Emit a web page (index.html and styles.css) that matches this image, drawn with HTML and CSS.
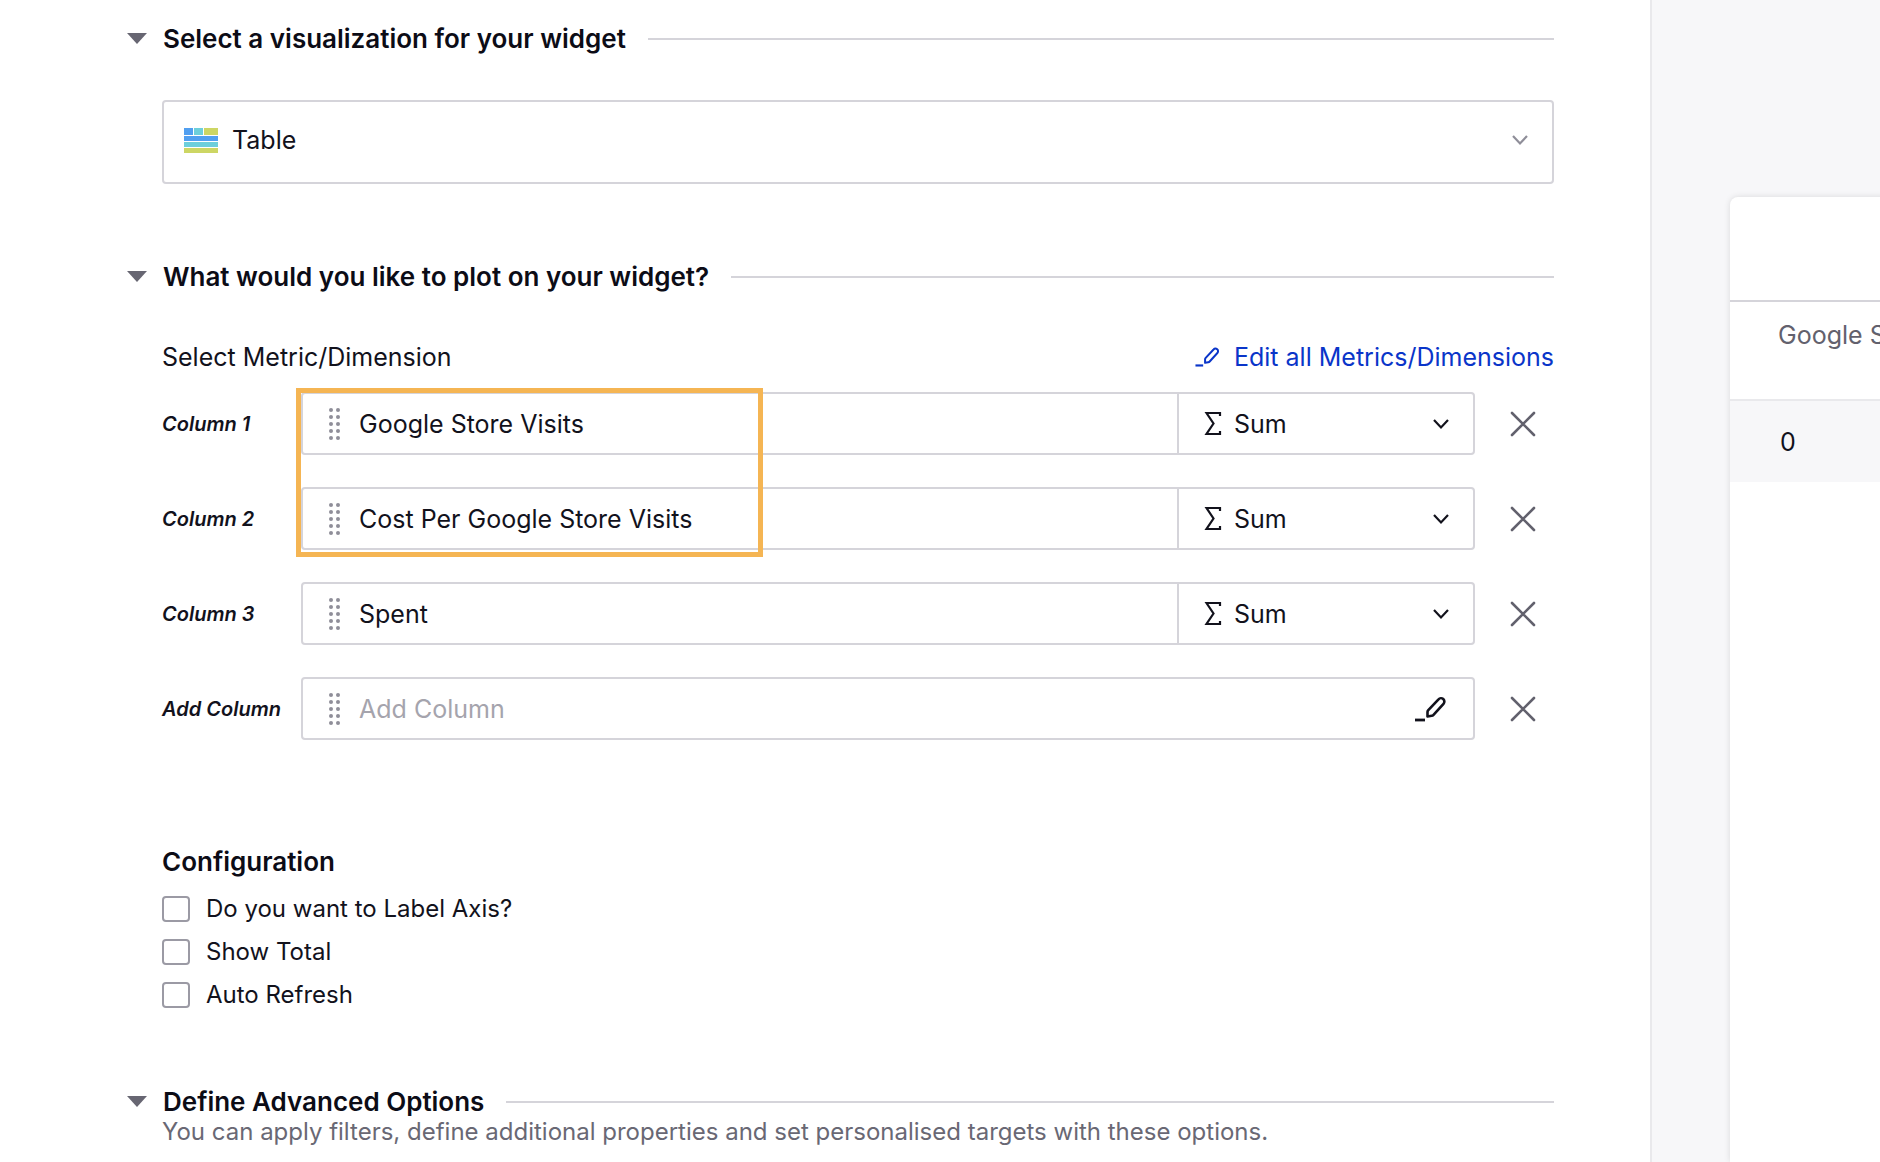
FILE: index.html
```
<!DOCTYPE html>
<html lang="en">
<head>
    <meta charset="UTF-8" />
    <meta name="viewport" content="width=device-width, initial-scale=1.0" />
    <title>Widget Builder</title>
    <link rel="stylesheet" href="styles.css">
</head>
<body>
    <!-- Shared icons -->
    <svg class="sprite" aria-hidden="true">
        <symbol id="icon-grip" viewBox="0 0 12 34">
            <g fill="#8f8e99">
                <circle cx="3" cy="3" r="2" /><circle cx="10" cy="3" r="2" />
                <circle cx="3" cy="10" r="2" /><circle cx="10" cy="10" r="2" />
                <circle cx="3" cy="17" r="2" /><circle cx="10" cy="17" r="2" />
                <circle cx="3" cy="24" r="2" /><circle cx="10" cy="24" r="2" />
                <circle cx="3" cy="31" r="2" /><circle cx="10" cy="31" r="2" />
            </g>
        </symbol>
        <symbol id="icon-sigma" viewBox="0 0 18 24">
            <path d="M16 4V1H2.500l7 10.500L2.500 22H16v-3" fill="none" stroke="currentColor" stroke-width="2.200" />
        </symbol>
        <symbol id="icon-chevron" viewBox="0 0 16 12">
            <path d="M1 2l7 7.500L15 2" fill="none" stroke="currentColor" stroke-width="2.200" />
        </symbol>
        <symbol id="icon-close" viewBox="0 0 26 26">
            <path d="M2 2l22 22M24 2L2 24" fill="none" stroke="currentColor" stroke-width="2.600" stroke-linecap="round" />
        </symbol>
        <symbol id="icon-pencil" viewBox="0 0 32 26">
            <path d="M1 24h10" fill="none" stroke="currentColor" stroke-width="2.800" />
            <path d="M13.500 20.500v-4.500q0-1 .8-1.900L24.500 3.300a3.300 3.300 0 0 1 5 4.500L19.500 18.800q-.8.900-1.800 1z" fill="none" stroke="currentColor" stroke-width="2.600" stroke-linejoin="round" />
        </symbol>
    </svg>

    <div class="layout">
        <main class="builder">
            <section class="visualization">
                <div class="section-head">
                    <button class="toggle" aria-label="Collapse section"></button>
                    <h2>Select a visualization for your widget</h2>
                </div>
                <div class="select-box visualization-select">
                    <svg class="icon-table" viewBox="0 0 34 26" aria-hidden="true">
                        <path fill="#519ff0" d="M0 1h9v7H0zM0 9h34v5H0z" />
                        <path fill="#6dcfdb" d="M10 1h9v7h-9zM0 15h34v5H0z" />
                        <path fill="#cdd664" d="M20 1h14v7H20zM0 21h34v5H0z" />
                    </svg>
                    <select aria-label="Visualization">
                        <option>Table</option>
                    </select>
                    <svg class="icon-chevron light"><use href="#icon-chevron" /></svg>
                </div>
            </section>

            <section class="plot">
                <div class="section-head">
                    <button class="toggle" aria-label="Collapse section"></button>
                    <h2>What would you like to plot on your widget?</h2>
                </div>
                <div class="metric-head">
                    <span>Select Metric/Dimension</span>
                    <a href="#"><svg class="icon-edit"><use href="#icon-pencil" /></svg>Edit all Metrics/Dimensions</a>
                </div>
                <div class="columns">
                    <div class="column-row">
                        <label for="column1">Column 1</label>
                        <div class="field">
                            <svg class="icon-grip"><use href="#icon-grip" /></svg>
                            <input id="column1" type="text" value="Google Store Visits" />
                            <div class="select-box aggregate">
                                <svg class="icon-sigma"><use href="#icon-sigma" /></svg>
                                <select aria-label="Column 1 aggregation"><option>Sum</option></select>
                                <svg class="icon-chevron"><use href="#icon-chevron" /></svg>
                            </div>
                        </div>
                        <button class="remove" aria-label="Remove Column 1"><svg><use href="#icon-close" /></svg></button>
                    </div>
                    <div class="column-row">
                        <label for="column2">Column 2</label>
                        <div class="field">
                            <svg class="icon-grip"><use href="#icon-grip" /></svg>
                            <input id="column2" type="text" value="Cost Per Google Store Visits" />
                            <div class="select-box aggregate">
                                <svg class="icon-sigma"><use href="#icon-sigma" /></svg>
                                <select aria-label="Column 2 aggregation"><option>Sum</option></select>
                                <svg class="icon-chevron"><use href="#icon-chevron" /></svg>
                            </div>
                        </div>
                        <button class="remove" aria-label="Remove Column 2"><svg><use href="#icon-close" /></svg></button>
                    </div>
                    <div class="column-row">
                        <label for="column3">Column 3</label>
                        <div class="field">
                            <svg class="icon-grip"><use href="#icon-grip" /></svg>
                            <input id="column3" type="text" value="Spent" />
                            <div class="select-box aggregate">
                                <svg class="icon-sigma"><use href="#icon-sigma" /></svg>
                                <select aria-label="Column 3 aggregation"><option>Sum</option></select>
                                <svg class="icon-chevron"><use href="#icon-chevron" /></svg>
                            </div>
                        </div>
                        <button class="remove" aria-label="Remove Column 3"><svg><use href="#icon-close" /></svg></button>
                    </div>
                    <div class="column-row">
                        <label for="column4">Add Column</label>
                        <div class="field">
                            <svg class="icon-grip"><use href="#icon-grip" /></svg>
                            <input id="column4" type="text" placeholder="Add Column" />
                            <button class="edit" aria-label="Edit column"><svg><use href="#icon-pencil" /></svg></button>
                        </div>
                        <button class="remove" aria-label="Remove column"><svg><use href="#icon-close" /></svg></button>
                    </div>
                    <div class="highlight"></div>
                </div>
            </section>

            <section class="configuration">
                <h3>Configuration</h3>
                <label><input type="checkbox" />Do you want to Label Axis?</label>
                <label><input type="checkbox" />Show Total</label>
                <label><input type="checkbox" />Auto Refresh</label>
            </section>

            <section class="advanced">
                <div class="section-head">
                    <button class="toggle" aria-label="Collapse section"></button>
                    <h2>Define Advanced Options</h2>
                </div>
                <p>You can apply filters, define additional properties and set personalised targets with these options.</p>
            </section>
        </main>

        <aside class="preview">
            <div class="preview-card">
                <div class="preview-title"></div>
                <table>
                    <thead>
                        <tr><th>Google Store Visits</th></tr>
                    </thead>
                    <tbody>
                        <tr><td>0</td></tr>
                    </tbody>
                </table>
            </div>
        </aside>
    </div>
</body>
</html>
```
FILE: styles.css
```
* {
    box-sizing: border-box;
}
body {
    font-family: 'Inter', sans-serif;
    font-size: 25px;
    line-height: 32px;
    margin: 0;
    color: #12121c;
    background-color: #fff;
}
h2, h3, p {
    margin: 0;
}
h2, h3 {
    font-size: 26px;
    font-weight: 600;
    color: #0c0c16;
}
button, input, select {
    font: inherit;
    color: inherit;
    margin: 0;
    padding: 0;
    border: 0;
    background: none;
}
svg {
    display: block;
    flex: none;
}
.sprite {
    position: absolute;
    width: 0;
    height: 0;
}
.layout {
    display: flex;
    min-height: 100vh;
}

/* Builder form */
.builder {
    flex: 1;
    min-width: 0;
    padding: 23px 96px 0 162px;
}
.section-head {
    display: flex;
    align-items: center;
    margin-left: -35px;
}
.section-head::after {
    content: "";
    flex: 1;
    height: 2px;
    margin-left: 22px;
    background-color: #d5d4da;
}
.toggle {
    width: 0;
    height: 0;
    margin: 0 16px 2px 0;
    border-left: 10px solid transparent;
    border-right: 10px solid transparent;
    border-top: 11px solid #676672;
}
.select-box {
    display: flex;
    align-items: center;
}
.select-box select {
    flex: 1;
    min-width: 0;
    appearance: none;
}
.visualization-select {
    height: 84px;
    margin-top: 45px;
    padding: 0 24px 4px 20px;
    border: 2px solid #d5d4da;
    border-radius: 4px;
}
.icon-table {
    width: 34px;
    height: 26px;
    margin-right: 14px;
}
.icon-chevron {
    width: 16px;
    height: 12px;
}
.icon-chevron.light {
    color: #8f8e99;
}
.plot {
    margin-top: 77px;
}
.metric-head {
    display: flex;
    justify-content: space-between;
    margin-top: 48px;
}
.metric-head a {
    display: flex;
    align-items: center;
    color: #0a35c9;
    text-decoration: none;
}
.icon-edit {
    width: 26px;
    height: 20px;
    margin-right: 14px;
}
.columns {
    position: relative;
    display: grid;
    gap: 32px;
    margin-top: 19px;
}
.column-row {
    display: grid;
    grid-template-columns: 139px 1fr 79px;
    align-items: center;
}
.column-row label {
    font-size: 20px;
    font-style: italic;
    font-weight: 600;
    white-space: nowrap;
}
.field {
    display: flex;
    align-items: center;
    height: 63px;
    border: 2px solid #d5d4da;
    border-radius: 4px;
}
.icon-grip {
    width: 12px;
    height: 34px;
    margin: 0 19px 0 25px;
}
.field input {
    flex: 1;
    min-width: 0;
    outline: none;
}
.field input::placeholder {
    color: #a5a4ad;
    opacity: 1;
}
.aggregate {
    width: 296px;
    height: 100%;
    padding: 0 24px 0 25px;
    border-left: 2px solid #d5d4da;
}
.icon-sigma {
    width: 18px;
    height: 24px;
    margin-right: 12px;
}
.edit {
    margin-right: 27px;
}
.edit svg {
    width: 32px;
    height: 26px;
}
.remove {
    justify-self: center;
    margin-left: 16px;
    color: #62616d;
}
.remove svg {
    width: 26px;
    height: 26px;
}
/* Callout drawn over the first two columns */
.highlight {
    position: absolute;
    top: -4px;
    left: 134px;
    width: 467px;
    height: 169px;
    border: 5px solid #f5b553;
    pointer-events: none;
}

/* Configuration */
.configuration {
    display: grid;
    justify-items: start;
    gap: 11px;
    margin-top: 106px;
}
.configuration h3 {
    margin-bottom: 4px;
}
.configuration label {
    display: flex;
    align-items: center;
    gap: 16px;
    font-size: 24px;
}
.configuration input {
    appearance: none;
    width: 28px;
    height: 26px;
    border: 2px solid #9b9aa4;
    border-radius: 4px;
}
.advanced {
    margin-top: 75px;
}
.advanced p {
    font-size: 24px;
    line-height: 28px;
    color: #696874;
}

/* Widget preview */
.preview {
    flex: 0 0 230px;
    padding: 197px 0 0 78px;
    border-left: 2px solid #e9e9ec;
    background-color: #f7f7f9;
    overflow: hidden;
}
.preview-card {
    width: 480px;
    height: 100%;
    border-radius: 8px 0 0 0;
    background-color: #fff;
    box-shadow: 0 0 6px rgba(0, 0, 0, 0.12);
}
.preview-title {
    height: 105px;
    border-bottom: 2px solid #d5d4da;
}
.preview table {
    width: 100%;
    border-collapse: collapse;
}
.preview th {
    height: 98px;
    padding: 17px 48px 0;
    border-bottom: 2px solid #e9e9ec;
    font-weight: 400;
    text-align: left;
    vertical-align: top;
    color: #62616d;
}
.preview td {
    height: 82px;
    padding: 0 50px;
    background-color: #f7f7f9;
}
```
